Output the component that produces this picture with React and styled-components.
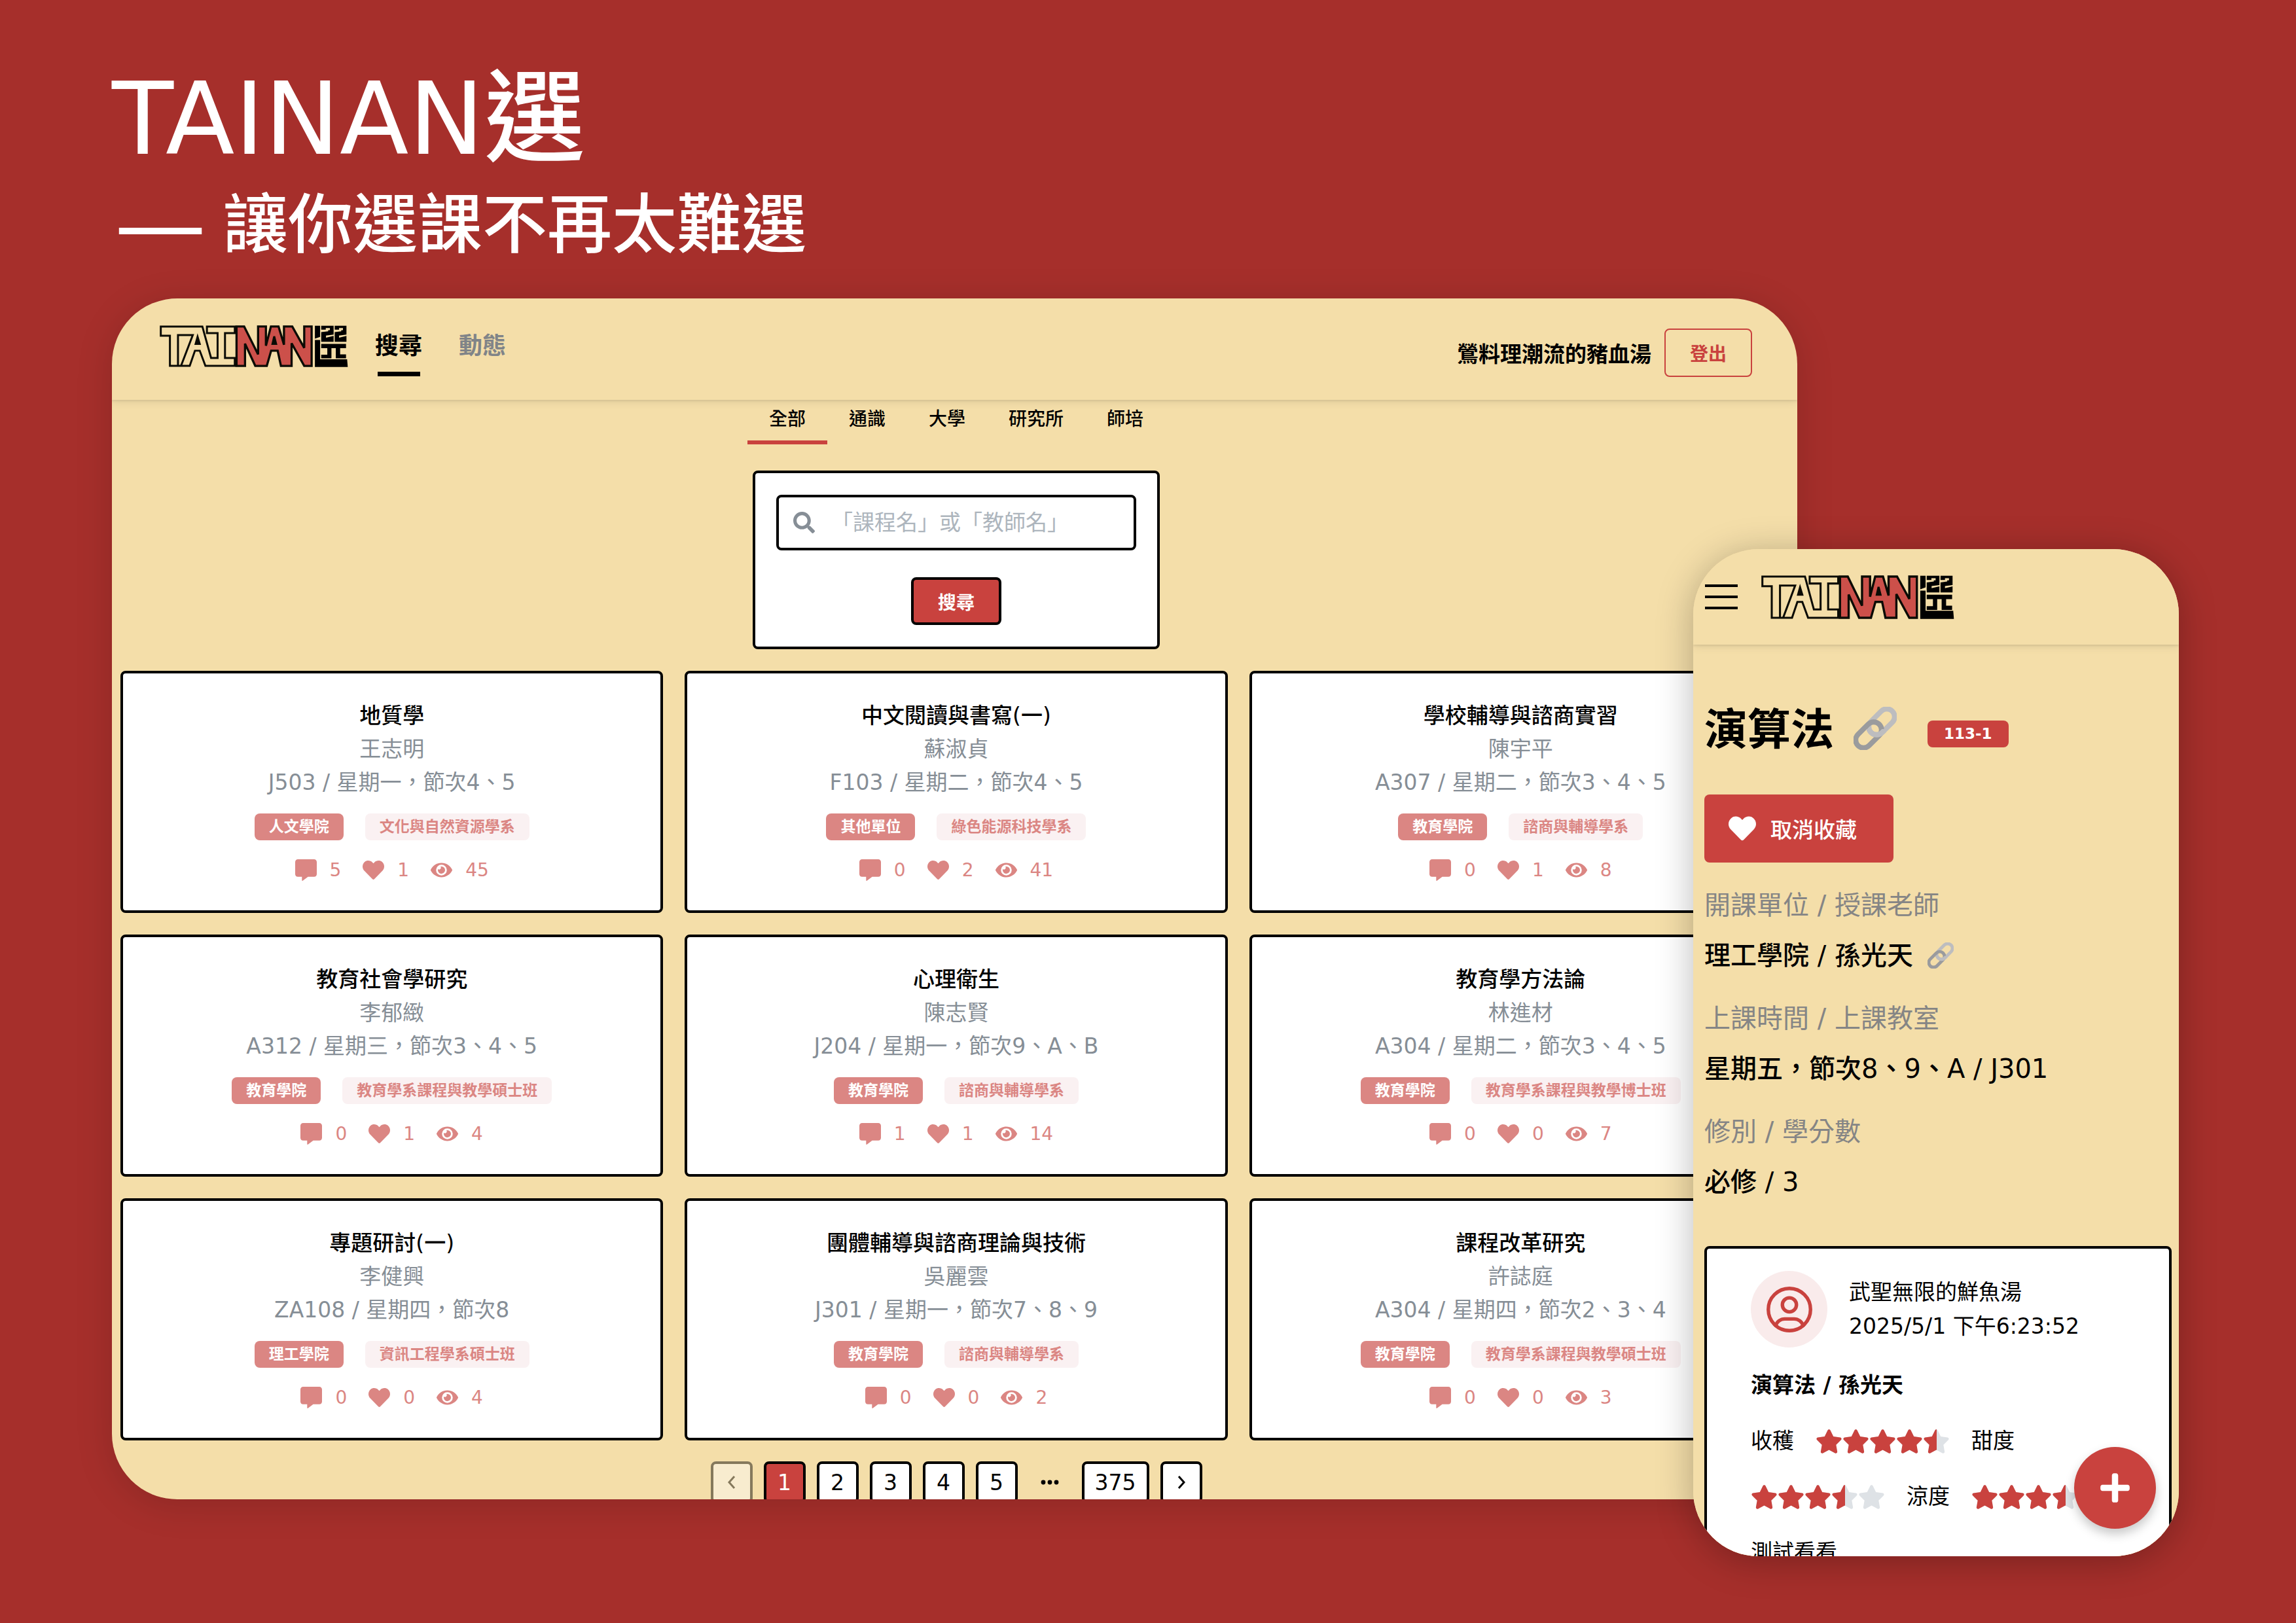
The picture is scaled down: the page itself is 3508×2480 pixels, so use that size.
import React from "react";
import styled, { createGlobalStyle } from "styled-components";
import { FaCommentAlt, FaEye, FaHeart, FaPlus, FaSearch, FaStar } from "react-icons/fa";

const color = {
  brick: "#a62f2b",
  red: "#c9423e",
  softRed: "#db8683",
  blush: "#faf1f2",
  cream: "#f4dea9",
  ink: "#000000",
  slate: "#868e96",
  gray: "#858585",
};

const GlobalStyle = createGlobalStyle`
  *, *::before, *::after { box-sizing: border-box; }
  body {
    margin: 0;
    background: ${color.brick};
    color: ${color.ink};
    font-family: "DejaVu Sans", "Noto Sans CJK TC", sans-serif;
    font-size: 33px;
  }
  h1, h2, h3, p, dl, dt, dd, ul { margin: 0; padding: 0; }
  ul { list-style: none; }
  a { color: inherit; text-decoration: none; }
  button, input { font-family: inherit; }
  svg { display: block; flex: none; }
`;

const Poster = styled.div`
  display: flex;
  flex-direction: column;
  height: 100vh;
  padding: 80px 179px 189px 171px;
`;

const Intro = styled.header`
  display: flex;
  flex-direction: column;
  flex: none;
  gap: 8px;
  height: 376px;
  color: #ffffff;
`;

const Title = styled.h1`
  font-size: 154px;
  font-weight: 500;
  line-height: 204px;
`;

const Slogan = styled.p`
  display: flex;
  align-items: center;
  gap: 26px;
  padding-left: 4px;
  font-size: 99px;
  font-weight: 500;
  line-height: 104px;
`;

const Dash = styled.span`
  font-size: 140px;
`;

const Stage = styled.main`
  position: relative;
  flex: 1;
  min-height: 0;
  padding-right: 583px;
`;

const Laptop = styled.section`
  height: 100%;
  overflow: hidden;
  border-radius: 100px;
  background: ${color.cream};
  box-shadow: 0 8px 56px rgba(0, 0, 0, 0.15);
`;

const Phone = styled.section`
  position: absolute;
  top: 383px;
  right: 0;
  bottom: -87px;
  width: 742px;
  overflow: hidden;
  border-radius: 100px;
  background: ${color.cream};
`;

const PhoneShadow = styled(Phone)`
  overflow: visible;
  box-shadow: 0 8px 56px rgba(0, 0, 0, 0.27);
`;

const Bar = styled.header`
  display: flex;
  align-items: center;
  box-shadow: 0 2px 3px rgba(0, 0, 0, 0.08), 0 4px 12px rgba(0, 0, 0, 0.08);
`;

const LaptopBar = styled(Bar)`
  justify-content: space-between;
  height: 155px;
  padding: 0 69px 0 73px;
`;

const PhoneBar = styled(Bar)`
  gap: 36px;
  height: 146px;
  padding: 0 18px;
`;

const BarLeft = styled.div`
  display: flex;
  align-items: center;
  gap: 41px;
  padding-bottom: 10px;
`;

const BarRight = styled.div`
  display: flex;
  align-items: center;
  gap: 20px;
  padding-top: 10px;
`;

const Nav = styled.nav`
  display: flex;
  gap: 56px;
`;

const NavLink = styled.a`
  display: flex;
  flex-direction: column;
  align-items: center;
  gap: 18px;
  padding-top: 25px;
  color: ${(p) => (p.$active ? color.ink : "#808488")};
  font-size: 36px;
  font-weight: 700;
  line-height: 43px;
  &::after {
    content: "";
    width: 65px;
    height: 7px;
    background: ${(p) => (p.$active ? color.ink : "transparent")};
  }
`;

const UserName = styled.span`
  font-size: 33px;
  font-weight: 700;
`;

const LogoutButton = styled.button`
  height: 74px;
  padding: 0 37px;
  border: 2px solid ${color.red};
  border-radius: 8px;
  background: transparent;
  color: ${color.red};
  font-size: 28px;
  font-weight: 700;
`;

const SearchPage = styled.div`
  display: flex;
  flex-direction: column;
  align-items: center;
  padding: 0 8px 0 13px;
`;

const TabList = styled.div`
  display: flex;
  height: 68px;
  margin-bottom: 40px;
`;

const Tab = styled.button`
  padding: 0 33px 8px;
  border: 0;
  border-bottom: 6px solid ${(p) => (p.$active ? color.red : "transparent")};
  background: transparent;
  color: ${color.ink};
  font-size: 28px;
  font-weight: 500;
`;

const SearchForm = styled.form`
  display: flex;
  flex-direction: column;
  align-items: center;
  gap: 41px;
  width: 622px;
  margin-bottom: 33px;
  padding: 33px 32px;
  border: 4px solid ${color.ink};
  border-radius: 8px;
  background: #ffffff;
`;

const SearchField = styled.label`
  display: flex;
  align-items: center;
  gap: 25px;
  width: 100%;
  height: 85px;
  padding: 0 22px;
  border: 4px solid ${color.ink};
  border-radius: 8px;
  color: ${color.slate};
`;

const SearchInput = styled.input`
  flex: 1;
  min-width: 0;
  height: 77px;
  padding: 0;
  border: 0;
  outline: 0;
  background: transparent;
  font-size: 33px;
  &::placeholder {
    color: #adb5bd;
    opacity: 1;
  }
`;

const SearchButton = styled.button`
  height: 73px;
  padding: 0 37px;
  border: 4px solid ${color.ink};
  border-radius: 8px;
  background: ${color.red};
  color: #ffffff;
  font-size: 28px;
  font-weight: 700;
`;

const CourseGrid = styled.div`
  display: grid;
  grid-template-columns: repeat(3, 1fr);
  gap: 33px;
  width: 100%;
`;

const CourseCard = styled.article`
  display: flex;
  flex-direction: column;
  align-items: center;
  padding: 39px 32px 36px;
  border: 4px solid ${color.ink};
  border-radius: 8px;
  background: #ffffff;
  color: ${color.slate};
  line-height: 51px;
`;

const CourseName = styled.h2`
  color: ${color.ink};
  font-size: 33px;
  font-weight: 500;
  line-height: 51px;
`;

const Badges = styled.div`
  display: flex;
  gap: 33px;
  margin: 22px 0 20px;
`;

const Badge = styled.span`
  height: 41px;
  padding: 0 ${(p) => (p.$strong ? 25 : 22)}px;
  border-radius: 8px;
  background: ${(p) => (p.$light ? color.blush : p.$strong ? color.red : color.softRed)};
  color: ${(p) => (p.$light ? color.softRed : "#ffffff")};
  font-size: 23px;
  font-weight: 700;
  line-height: 41px;
`;

const Stats = styled.ul`
  display: flex;
  gap: 33px;
  color: ${color.softRed};
  font-size: 28px;
`;

const Stat = styled.li`
  display: flex;
  align-items: center;
  gap: 20px;
`;

const Pager = styled.nav`
  display: flex;
  gap: 17px;
  margin-top: 32px;
`;

const PageButton = styled.button`
  display: flex;
  align-items: center;
  justify-content: center;
  min-width: 64px;
  height: 64px;
  padding: 0 16px;
  border: 4px solid ${color.ink};
  border-radius: 8px;
  background: ${(p) => (p.$active ? color.red : "#ffffff")};
  color: ${(p) => (p.$active ? "#ffffff" : color.ink)};
  font-size: 33px;
  &:disabled { opacity: 0.45; }
`;

const PageGap = styled.span`
  display: flex;
  align-items: center;
  justify-content: center;
  width: 64px;
`;

const MenuButton = styled.button`
  display: flex;
  flex-direction: column;
  justify-content: space-between;
  width: 50px;
  height: 38px;
  padding: 0;
  border: 0;
  background: transparent;
`;

const MenuLine = styled.span`
  height: 4px;
  background: ${color.ink};
`;

const CoursePage = styled.div`
  padding: 82px 11px 40px 17px;
`;

const CourseHeading = styled.div`
  display: flex;
  align-items: center;
  height: 92px;
`;

const CourseTitle = styled.h2`
  margin-right: 30px;
  padding-bottom: 8px;
  font-size: 66px;
  font-weight: 700;
`;

const TermBadge = styled.div`
  display: flex;
  margin: 16px 0 0 47px;
`;

const FavoriteButton = styled.button`
  display: flex;
  align-items: center;
  gap: 22px;
  height: 104px;
  margin: 55px 0 39px;
  padding: 0 56px 0 37px;
  border: 0;
  border-radius: 8px;
  background: ${color.red};
  color: #ffffff;
  font-size: 33px;
  font-weight: 500;
`;

const Facts = styled.dl`
  margin-bottom: 72px;
  font-size: 40px;
  line-height: 52px;
`;

const FactLabel = styled.dt`
  color: ${color.gray};
`;

const FactValue = styled.dd`
  display: flex;
  align-items: center;
  gap: 22px;
  margin-top: 25px;
  font-weight: 500;
  &:not(:last-child) { margin-bottom: 44px; }
`;

const Review = styled.article`
  padding: 34px 67px;
  border: 4px solid ${color.ink};
  border-radius: 8px;
  background: #ffffff;
  line-height: 52px;
`;

const Author = styled.div`
  display: flex;
  align-items: center;
  gap: 33px;
  margin-bottom: 32px;
`;

const Avatar = styled.span`
  display: grid;
  place-items: center;
  width: 117px;
  height: 117px;
  border-radius: 50%;
  background: #f9ebeb;
  color: ${color.red};
`;

const ReviewTitle = styled.h3`
  font-size: 33px;
  font-weight: 700;
`;

const Ratings = styled.div`
  display: flex;
  flex-wrap: wrap;
  gap: 33px;
  margin: 33px 0;
`;

const Stars = styled.span`
  display: flex;
  align-items: center;
  height: 52px;
`;

const StarCell = styled.span`
  position: relative;
  width: 41px;
  color: #dee2e6;
`;

const StarFill = styled.span`
  position: absolute;
  top: 0;
  left: 0;
  overflow: hidden;
  color: ${color.red};
`;

const AddButton = styled.button`
  position: absolute;
  right: 35px;
  bottom: 42px;
  display: grid;
  place-items: center;
  width: 125px;
  height: 125px;
  padding: 0;
  border: 0;
  border-radius: 50%;
  background: ${color.red};
  color: #ffffff;
  box-shadow: 0 8px 16px rgba(0, 0, 0, 0.22);
`;

function Logo({ width, height }) {
  return (
    <svg width={width} height={height} viewBox="26 34 866 196" preserveAspectRatio="none" role="img" aria-label="TAINAN選">
      <g fill="none" stroke="#0b0b05" strokeWidth="9">
        <path d="M31 40H222L262 187H292V71H243V40H371V71H326V187H371V224H236L210 153H188L164 224H73V83H31Z" />
        <path d="M110 224V80H178L124 224" />
        <path d="M200 88L191 121H210Z" fill="#0b0b05" />
        <path
          fill="#cc504a"
          strokeWidth="10"
          d="M379 40H414L478 170V40H514V130L537 40H572L597 125V40H635L690 140V40H724V224H690L632 118V224H583L568 153H538L518 224H465L418 120V224H379Z"
        />
        <path d="M552 86L544 121H561Z" fill="#0b0b05" />
      </g>
      <g fill="#000000">
        <path d="M739 36H763V88L739 97Z" />
        <path d="M739 103H763V193H887L890 229H739Z" />
        <path d="M768 36H825V78L790 82V92L825 84V111H768V66L800 62V55H768Z" />
        <path d="M830 36H884V78L850 82V92L884 84V111H830V66L860 62V55H830Z" />
        <path d="M768 121H882V141H855V170H882V189H835V141H815V189H768V172H796V141H768Z" />
      </g>
      <g fill={color.cream}>
        <path d="M789 47H808V57H789Z" />
        <path d="M850 47H868V57H850Z" />
      </g>
    </svg>
  );
}

function ChainIcon({ size }) {
  const id = `chain-${size}`;
  return (
    <svg width={size} height={size} viewBox="0 0 66 66" fill="none" strokeWidth="8" role="img" aria-label="連結">
      <clipPath id={id}>
        <path d="M14 34H50V50H14Z" />
      </clipPath>
      <rect x="20" y="11" width="46" height="24" rx="12" stroke="#bdbdbf" transform="rotate(-45 43 23)" />
      <rect x="0" y="31" width="46" height="24" rx="12" stroke="#9a9b9d" transform="rotate(-45 23 43)" />
      <g clipPath={`url(#${id})`}>
        <rect x="20" y="11" width="46" height="24" rx="12" stroke="#bdbdbf" transform="rotate(-45 43 23)" />
      </g>
    </svg>
  );
}

function UserIcon() {
  return (
    <svg width="86" height="86" viewBox="0 0 24 24" fill="none" stroke="currentColor" strokeWidth="1.5" strokeLinecap="round">
      <circle cx="12" cy="12" r="9" />
      <circle cx="12" cy="10" r="3" />
      <path d="M6.168 18.849A4 4 0 0 1 10 16h4a4 4 0 0 1 3.834 2.855" />
    </svg>
  );
}

function Chevron({ left }) {
  return (
    <svg width="12" height="20" viewBox="0 0 12 20" fill="none" stroke="currentColor" strokeWidth="3">
      <path d={left ? "M10 1L2 10L10 19" : "M2 1L10 10L2 19"} />
    </svg>
  );
}

function Dots() {
  return (
    <svg width="28" height="8" viewBox="0 0 28 8" fill="currentColor">
      <circle cx="4" cy="4" r="3.4" />
      <circle cx="14" cy="4" r="3.4" />
      <circle cx="24" cy="4" r="3.4" />
    </svg>
  );
}

function Rating({ label, value }) {
  return (
    <>
      <span>{label}</span>
      <Stars role="img" aria-label={`${label} ${value}`}>
        {[0, 1, 2, 3, 4].map((n) => {
          const part = Math.max(0, Math.min(1, value - n));
          return (
            <StarCell key={n}>
              <FaStar size={41} />
              <StarFill style={{ width: Math.round(part * 41) }}>
                <FaStar size={41} />
              </StarFill>
            </StarCell>
          );
        })}
      </Stars>
    </>
  );
}

const courses = [
  ["地質學", "王志明", "J503 / 星期一，節次4、5", "人文學院", "文化與自然資源學系", 5, 1, 45],
  ["中文閱讀與書寫(一)", "蘇淑貞", "F103 / 星期二，節次4、5", "其他單位", "綠色能源科技學系", 0, 2, 41],
  ["學校輔導與諮商實習", "陳宇平", "A307 / 星期二，節次3、4、5", "教育學院", "諮商與輔導學系", 0, 1, 8],
  ["教育社會學研究", "李郁緻", "A312 / 星期三，節次3、4、5", "教育學院", "教育學系課程與教學碩士班", 0, 1, 4],
  ["心理衛生", "陳志賢", "J204 / 星期一，節次9、A、B", "教育學院", "諮商與輔導學系", 1, 1, 14],
  ["教育學方法論", "林進材", "A304 / 星期二，節次3、4、5", "教育學院", "教育學系課程與教學博士班", 0, 0, 7],
  ["專題研討(一)", "李健興", "ZA108 / 星期四，節次8", "理工學院", "資訊工程學系碩士班", 0, 0, 4],
  ["團體輔導與諮商理論與技術", "吳麗雲", "J301 / 星期一，節次7、8、9", "教育學院", "諮商與輔導學系", 0, 0, 2],
  ["課程改革研究", "許誌庭", "A304 / 星期四，節次2、3、4", "教育學院", "教育學系課程與教學碩士班", 0, 0, 3],
];

function Course({ data }) {
  const [name, teacher, place, college, department, comments, likes, views] = data;
  return (
    <CourseCard>
      <CourseName>{name}</CourseName>
      <p>{teacher}</p>
      <p>{place}</p>
      <Badges>
        <Badge>{college}</Badge>
        <Badge $light>{department}</Badge>
      </Badges>
      <Stats>
        <Stat><FaCommentAlt size={33} />{comments}</Stat>
        <Stat><FaHeart size={33} />{likes}</Stat>
        <Stat><FaEye size={33} />{views}</Stat>
      </Stats>
    </CourseCard>
  );
}

const tabs = ["全部", "通識", "大學", "研究所", "師培"];

export default function App() {
  return (
    <Poster lang="zh-Hant">
      <GlobalStyle />
      <Intro>
        <Title>TAINAN選</Title>
        <Slogan><Dash>—</Dash>讓你選課不再太難選</Slogan>
      </Intro>
      <Stage>
        <Laptop>
          <LaptopBar>
            <BarLeft>
              <a href="#home"><Logo width={288} height={64} /></a>
              <Nav>
                <NavLink href="#search" $active>搜尋</NavLink>
                <NavLink href="#feed">動態</NavLink>
              </Nav>
            </BarLeft>
            <BarRight>
              <UserName>鶯料理潮流的豬血湯</UserName>
              <LogoutButton type="button">登出</LogoutButton>
            </BarRight>
          </LaptopBar>
          <SearchPage>
            <TabList role="tablist">
              {tabs.map((tab, i) => (
                <Tab key={tab} type="button" role="tab" aria-selected={i === 0} $active={i === 0}>{tab}</Tab>
              ))}
            </TabList>
            <SearchForm onSubmit={(e) => e.preventDefault()}>
              <SearchField>
                <FaSearch size={33} />
                <SearchInput type="text" aria-label="課程名或教師名" placeholder="「課程名」或「教師名」" />
              </SearchField>
              <SearchButton type="submit">搜尋</SearchButton>
            </SearchForm>
            <CourseGrid>
              {courses.map((c) => <Course key={c[0]} data={c} />)}
            </CourseGrid>
            <Pager aria-label="分頁">
              <PageButton type="button" disabled aria-label="上一頁"><Chevron left /></PageButton>
              {[1, 2, 3, 4, 5].map((n) => (
                <PageButton key={n} type="button" $active={n === 1}>{n}</PageButton>
              ))}
              <PageGap><Dots /></PageGap>
              <PageButton type="button">375</PageButton>
              <PageButton type="button" aria-label="下一頁"><Chevron /></PageButton>
            </Pager>
          </SearchPage>
        </Laptop>
        <PhoneShadow as="div" aria-hidden="true" />
        <Phone>
          <PhoneBar>
            <MenuButton type="button" aria-label="選單">
              <MenuLine />
              <MenuLine />
              <MenuLine />
            </MenuButton>
            <Logo width={295} height={67} />
          </PhoneBar>
          <CoursePage>
            <CourseHeading>
              <CourseTitle>演算法</CourseTitle>
              <a href="#course"><ChainIcon size={66} /></a>
              <TermBadge><Badge $strong>113-1</Badge></TermBadge>
            </CourseHeading>
            <FavoriteButton type="button"><FaHeart size={42} />取消收藏</FavoriteButton>
            <Facts>
              <FactLabel>開課單位 / 授課老師</FactLabel>
              <FactValue>理工學院 / 孫光天<a href="#teacher"><ChainIcon size={40} /></a></FactValue>
              <FactLabel>上課時間 / 上課教室</FactLabel>
              <FactValue>星期五，節次8、9、A / J301</FactValue>
              <FactLabel>修別 / 學分數</FactLabel>
              <FactValue>必修 / 3</FactValue>
            </Facts>
            <Review>
              <Author>
                <Avatar><UserIcon /></Avatar>
                <div>
                  <p>武聖無限的鮮魚湯</p>
                  <p>2025/5/1 下午6:23:52</p>
                </div>
              </Author>
              <ReviewTitle>演算法 / 孫光天</ReviewTitle>
              <Ratings>
                <Rating label="收穫" value={4.5} />
                <Rating label="甜度" value={3.5} />
                <Rating label="涼度" value={3.5} />
              </Ratings>
              <p>測試看看</p>
            </Review>
          </CoursePage>
          <AddButton type="button" aria-label="新增"><FaPlus size={51} /></AddButton>
        </Phone>
      </Stage>
    </Poster>
  );
}
